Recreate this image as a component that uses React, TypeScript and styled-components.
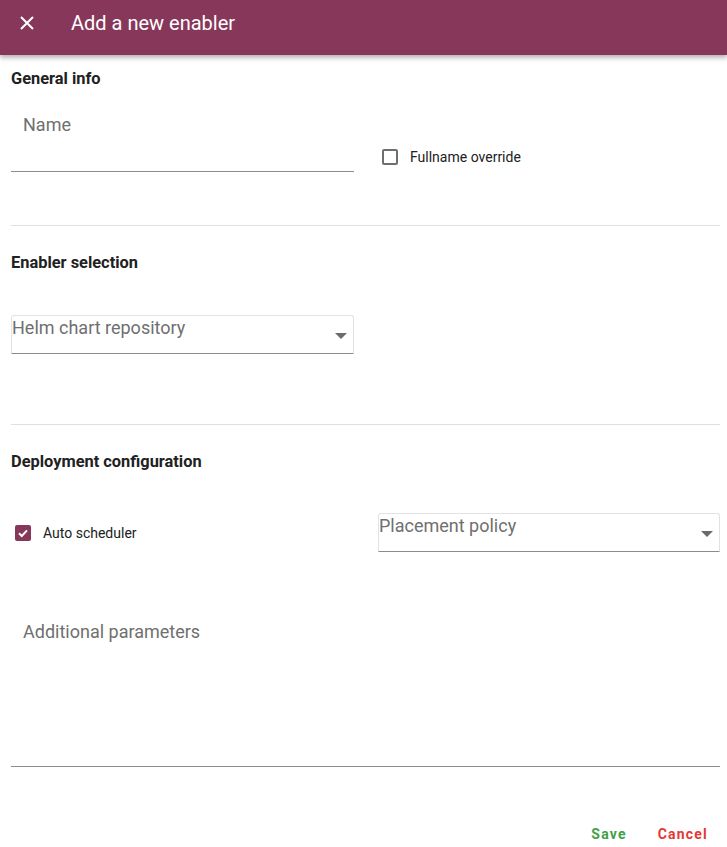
import React from "react";
import styled, { createGlobalStyle } from "styled-components";

const Global = createGlobalStyle`
  html, body { margin: 0; padding: 0; background: #fff; }
  body { font-family: Roboto, "Noto Sans", Arial, sans-serif; }
  * { box-sizing: border-box; }
`;

const Page = styled.div`
  width: 727px;
  min-height: 847px;
  display: flex;
  flex-direction: column;
`;

const AppBar = styled.header`
  height: 55px;
  background: #87375a;
  display: flex;
  align-items: center;
  padding: 0 0 0 18px;
  box-shadow: 0 2px 4px rgba(0,0,0,0.2), 0 4px 5px rgba(0,0,0,0.12);
  position: relative;
  z-index: 1;
`;

const CloseButton = styled.button`
  width: 18px;
  height: 18px;
  padding: 0;
  border: none;
  background: none;
  display: flex;
  align-items: center;
  justify-content: center;
  margin-top: -10px;
  margin-right: 35px;
`;

const Title = styled.h1`
  margin: -10px 0 0 0;
  font-size: 20px;
  font-weight: 400;
  color: #fff;
`;

const Body = styled.div`
  padding: 0 7px 0 11px;
  display: flex;
  flex-direction: column;
`;

const SectionTitle = styled.h2<{ $top: number }>`
  margin: ${(p) => p.$top}px 0 0 0;
  font-size: 16.4px;
  font-weight: 700;
  color: #212121;
  line-height: 19px;
`;

const Divider = styled.hr<{ $top: number }>`
  margin: ${(p) => p.$top}px 0 0 0;
  border: none;
  border-top: 1px solid #e0e0e0;
  height: 0;
`;

const Row = styled.div<{ $top: number; $align?: string }>`
  display: flex;
  align-items: ${(p) => p.$align || "center"};
  margin-top: ${(p) => p.$top}px;
`;

const TextField = styled.div<{ $height: number; $width?: number }>`
  width: ${(p) => (p.$width ? `${p.$width}px` : "100%")};
  height: ${(p) => p.$height}px;
  border-bottom: 1px solid #8c8c8c;
  padding: 12px 0 0 12px;
  flex-shrink: 0;
`;

const FieldLabel = styled.span`
  font-size: 18px;
  color: #6f6f6f;
  line-height: 22px;
`;

const Select = styled.div<{ $width: number }>`
  width: ${(p) => p.$width}px;
  height: 39px;
  border: 1px solid #e2e2e2;
  border-bottom: 1px solid #8c8c8c;
  border-radius: 3px 3px 0 0;
  display: flex;
  align-items: flex-start;
  justify-content: space-between;
  padding: 1px 6px 0 0;
  flex-shrink: 0;
`;

const SelectText = styled.span`
  font-size: 18px;
  color: #6f6f6f;
  line-height: 22px;
`;

const Arrow = styled.span`
  width: 0;
  height: 0;
  border-left: 6px solid transparent;
  border-right: 6px solid transparent;
  border-top: 6px solid #6b6b6b;
  margin-top: 16px;
`;

const CheckLabel = styled.label<{ $ml: number; $mb?: number }>`
  display: flex;
  align-items: center;
  margin-left: ${(p) => p.$ml}px;
  margin-bottom: ${(p) => p.$mb || 0}px;
  font-size: 14px;
  line-height: 16px;
  color: #212121;
  gap: 12px;
`;

const Box = styled.span<{ $checked?: boolean }>`
  width: 16px;
  height: 16px;
  border-radius: 2px;
  border: ${(p) => (p.$checked ? "none" : "2px solid #6f6f6f")};
  background: ${(p) => (p.$checked ? "#87375a" : "#fff")};
  display: flex;
  align-items: center;
  justify-content: center;
`;

const Spacer = styled.div`
  flex: 1;
`;

const Actions = styled.div`
  display: flex;
  justify-content: flex-end;
  gap: 31px;
  margin-top: 59px;
  padding-right: 12px;
`;

const ActionButton = styled.button<{ $color: string }>`
  border: none;
  background: none;
  padding: 0;
  font-family: Roboto, Arial, sans-serif;
  font-size: 14px;
  font-weight: 700;
  letter-spacing: 1.2px;
  color: ${(p) => p.$color};
`;

export default function App() {
  return (
    <Page>
      <Global />
      <AppBar>
        <CloseButton aria-label="close">
          <svg width="14" height="14" viewBox="0 0 14 14">
            <path d="M1 1L13 13M13 1L1 13" stroke="#fff" strokeWidth="2" />
          </svg>
        </CloseButton>
        <Title>Add a new enabler</Title>
      </AppBar>
      <Body>
        <SectionTitle $top={14}>General info</SectionTitle>
        <Row $top={14} $align="flex-end">
          <TextField $height={70} $width={343}>
            <FieldLabel>Name</FieldLabel>
          </TextField>
          <CheckLabel $ml={28} $mb={7}>
            <Box />
            Fullname override
          </CheckLabel>
        </Row>
        <Divider $top={53} />
        <SectionTitle $top={27}>Enabler selection</SectionTitle>
        <Row $top={43}>
          <Select $width={343}>
            <SelectText>Helm chart repository</SelectText>
            <Arrow />
          </Select>
        </Row>
        <Divider $top={70} />
        <SectionTitle $top={27}>Deployment configuration</SectionTitle>
        <Row $top={42}>
          <CheckLabel $ml={4}>
            <Box $checked>
              <svg width="12" height="12" viewBox="0 0 12 12">
                <path d="M2 6.2L4.8 9L10 3.4" stroke="#fff" strokeWidth="2" fill="none" />
              </svg>
            </Box>
            Auto scheduler
          </CheckLabel>
          <Spacer />
          <Select $width={342}>
            <SelectText>Placement policy</SelectText>
            <Arrow />
          </Select>
        </Row>
        <Row $top={57}>
          <TextField $height={158}>
            <FieldLabel>Additional parameters</FieldLabel>
          </TextField>
        </Row>
        <Actions>
          <ActionButton $color="#43a047">Save</ActionButton>
          <ActionButton $color="#e53935">Cancel</ActionButton>
        </Actions>
      </Body>
    </Page>
  );
}
